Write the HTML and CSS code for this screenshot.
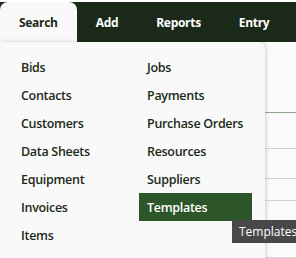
FILE: index.html
```html
<!DOCTYPE html>
<html lang="en">
<head>
  <meta charset="UTF-8" />
  <meta name="viewport" content="width=device-width, initial-scale=1.0" />
  <title>Search menu</title>
  <link rel="stylesheet" href="styles.css">
</head>
<body>
  <nav class="topnav">
    <a class="tab active" href="#search">Search</a>
    <a class="tab" href="#add">Add</a>
    <a class="tab" href="#reports">Reports</a>
    <a class="tab" href="#entry">Entry</a>
  </nav>

  <!-- page content behind the open menu -->
  <main class="content">
    <div class="row row-head"></div>
    <div class="row r1"></div>
    <div class="row r2"></div>
    <div class="row r3"></div>
    <div class="row r4"></div>
  </main>

  <div class="dropdown">
    <div class="col">
      <a href="#">Bids</a>
      <a href="#">Contacts</a>
      <a href="#">Customers</a>
      <a href="#">Data Sheets</a>
      <a href="#">Equipment</a>
      <a href="#">Invoices</a>
      <a href="#">Items</a>
    </div>
    <div class="col">
      <a href="#">Jobs</a>
      <a href="#">Payments</a>
      <a href="#">Purchase Orders</a>
      <a href="#">Resources</a>
      <a href="#">Suppliers</a>
      <a class="hover" href="#">Templates</a>
    </div>
  </div>

  <div class="tooltip">Templates</div>
</body>
</html>
```

FILE: styles.css
```css
html, body {
  margin: 0;
  height: 100%;
  overflow: hidden;
}
body {
  background: #ffffff;
  font-family: 'Open Sans', 'Noto Sans', sans-serif;
  padding-top: 2px;
  box-sizing: border-box;
}

/* Top bar */
.topnav {
  display: flex;
  height: 40px;
  background: #1b2a18;
}
.tab {
  display: flex;
  align-items: center;
  padding: 0 19px;
  color: #ffffff;
  font-weight: 700;
  font-size: 12px;
  text-decoration: none;
  letter-spacing: -0.3px;
}
.tab.active {
  background: #f9f9f9;
  color: #1b2a18;
  border-radius: 8px 8px 0 0;
}

/* Content behind */
.content {
  background: #fbfbfb;
}
.row {
  border-bottom: 1px solid #d4d4d4;
  box-sizing: border-box;
}
.row-head {
  height: 71px;
  border-bottom: 1px solid #8fa68b;
}
.r1 { height: 36px; }
.r2 { height: 30px; }
.r3 { height: 22px; }
.r4 { height: 57px; }

/* Dropdown */
.dropdown {
  position: absolute;
  top: 42px;
  left: 0;
  width: 265px;
  height: 216px;
  box-sizing: border-box;
  padding: 11px 13px 0;
  background: #f9f9f9;
  border-radius: 0 6px 0 0;
  box-shadow: 1px 0 4px rgba(0, 0, 0, 0.18);
  display: grid;
  grid-template-columns: 126px 113px;
  align-items: start;
}
.col {
  display: flex;
  flex-direction: column;
}
.col a {
  display: flex;
  align-items: center;
  height: 28px;
  padding: 0 8px;
  color: #1c2a1a;
  font-weight: 600;
  font-size: 12.5px;
  text-decoration: none;
  letter-spacing: -0.3px;
  white-space: nowrap;
}
.col a.hover {
  background: #2c5629;
  color: #ffffff;
}

/* Tooltip */
.tooltip {
  position: absolute;
  top: 220px;
  left: 232px;
  height: 23px;
  padding: 0 8px 0 7px;
  display: flex;
  align-items: center;
  background: #484848;
  color: #ffffff;
  font-size: 12px;
  white-space: nowrap;
}
```
